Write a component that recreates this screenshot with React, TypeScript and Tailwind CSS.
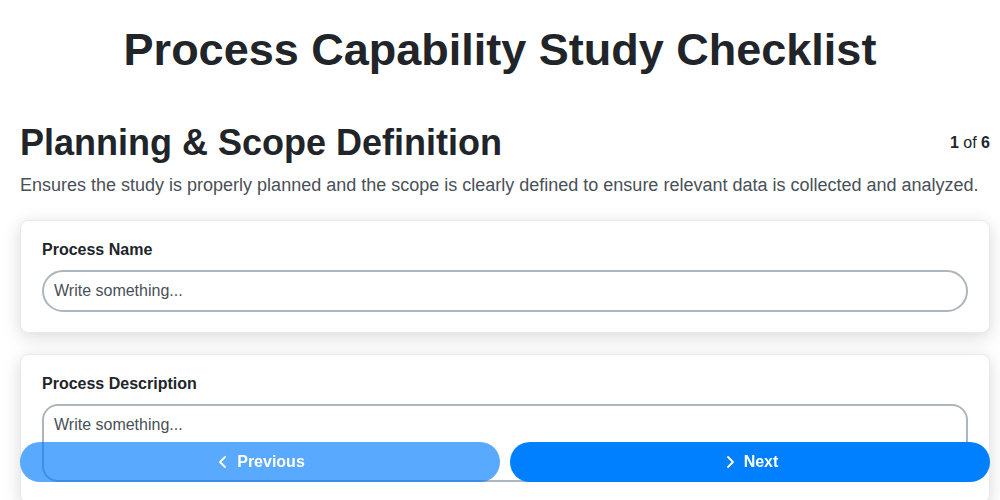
import React from "react";

const font = { fontFamily: '"Liberation Sans", Arial, sans-serif' };

function ChevronLeft() {
  return (
    <svg width="16" height="16" viewBox="0 0 16 16" fill="none" stroke="currentColor" strokeWidth="1.8" strokeLinecap="round" strokeLinejoin="round">
      <path d="M10 3 L5 8 L10 13" />
    </svg>
  );
}
function ChevronRight() {
  return (
    <svg width="16" height="16" viewBox="0 0 16 16" fill="none" stroke="currentColor" strokeWidth="1.8" strokeLinecap="round" strokeLinejoin="round">
      <path d="M6 3 L11 8 L6 13" />
    </svg>
  );
}

export default function App() {
  return (
    <div className="min-h-screen bg-white text-[#212529]" style={font}>
      <h1 className="text-center text-[45px] font-bold leading-[54px] pt-[23px] pb-[44px]">
        Process Capability Study Checklist
      </h1>
      <div className="pl-5 pr-[10px] pb-24">
        <div className="flex items-center justify-between">
          <h2 className="text-[36px] font-bold leading-[43px]">Planning &amp; Scope Definition</h2>
          <div className="text-[16px]">
            <span className="font-bold">1</span> of <span className="font-bold">6</span>
          </div>
        </div>
        <p className="mt-[8px] text-[18px] leading-[27px] text-[#495057]">
          Ensures the study is properly planned and the scope is clearly defined to ensure relevant data is collected and analyzed.
        </p>
        <div className="mt-[21px] flex flex-col gap-[21px]">
          <div className="rounded-lg border border-[#e9e9ee] bg-white px-[21px] pt-[19px] pb-[20px] shadow-[0_4px_18px_rgba(0,0,0,0.15)]">
            <label className="block text-[16px] font-bold leading-[19px] mb-[11px]">Process Name</label>
            <div className="h-[42px] rounded-full border-2 border-[#adb5bd] flex items-center px-[10px] text-[16px] text-[#495057]">
              Write something...
            </div>
          </div>
          <div className="rounded-lg border border-[#e9e9ee] bg-white px-[21px] pt-[19px] pb-[20px] shadow-[0_4px_18px_rgba(0,0,0,0.15)]">
            <label className="block text-[16px] font-bold leading-[19px] mb-[11px]">Process Description</label>
            <div className="h-[78px] rounded-2xl border-2 border-[#adb5bd] px-[10px] pt-[7px] text-[16px] text-[#495057]">
              Write something...
            </div>
          </div>
        </div>
      </div>
      <div className="fixed left-5 right-[10px] bottom-[18px] flex gap-[10px]">
        <button className="flex-1 h-[40px] rounded-full bg-[#007bff]/65 text-white font-bold text-[16px] flex items-center justify-center gap-[6px]">
          <ChevronLeft />
          Previous
        </button>
        <button className="flex-1 h-[40px] rounded-full bg-[#0080ff] text-white font-bold text-[16px] flex items-center justify-center gap-[6px]">
          <ChevronRight />
          Next
        </button>
      </div>
    </div>
  );
}
